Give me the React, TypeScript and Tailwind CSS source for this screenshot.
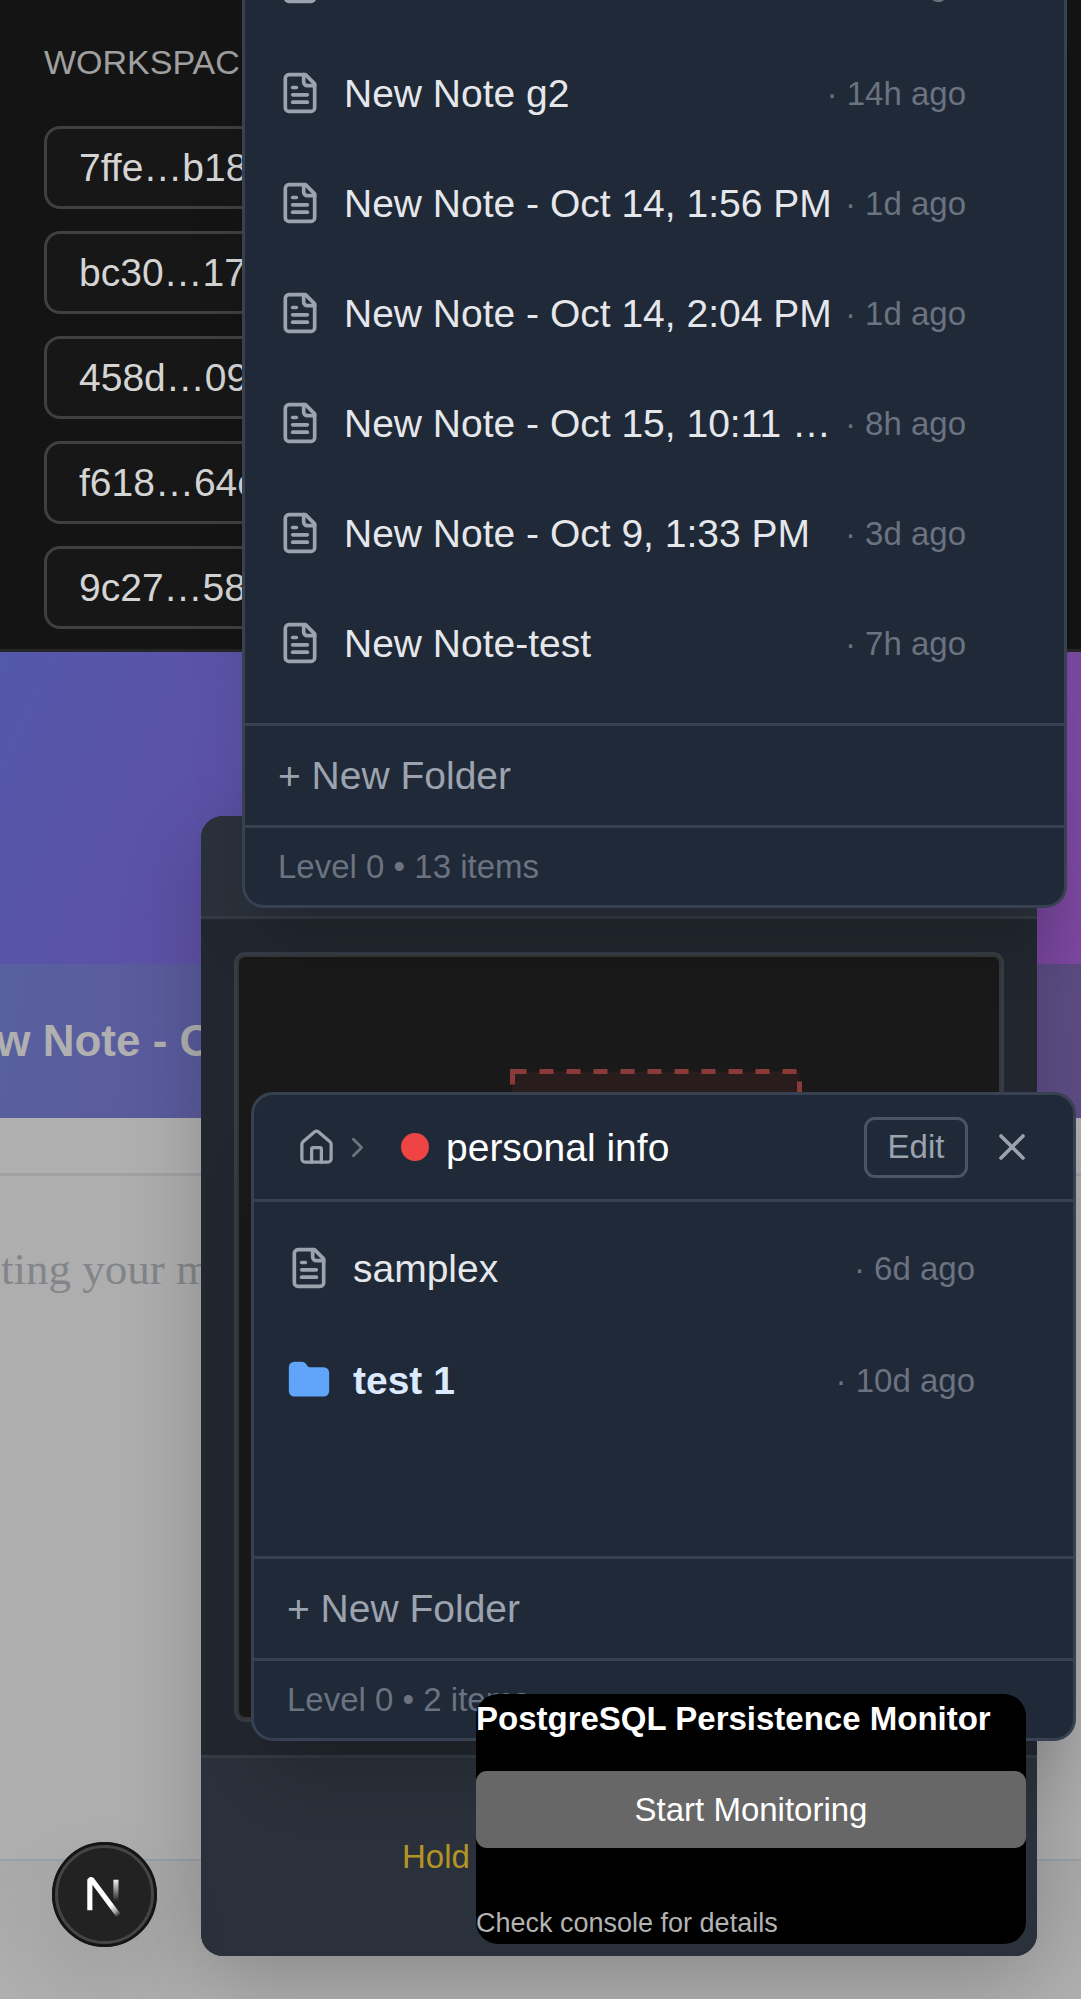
import React from "react";
import { ChevronRight, X } from "lucide-react";

type Item = { kind: "note" | "folder"; title: string; time: string };

const workspaces = ["7ffe…b18", "bc30…17", "458d…09", "f618…64c", "9c27…58"];

const rootItems: Item[] = [
  { kind: "note", title: "New Note", time: "14h ago" },
  { kind: "note", title: "New Note g2", time: "14h ago" },
  { kind: "note", title: "New Note - Oct 14, 1:56 PM", time: "1d ago" },
  { kind: "note", title: "New Note - Oct 14, 2:04 PM", time: "1d ago" },
  { kind: "note", title: "New Note - Oct 15, 10:11 PM", time: "8h ago" },
  { kind: "note", title: "New Note - Oct 9, 1:33 PM", time: "3d ago" },
  { kind: "note", title: "New Note-test", time: "7h ago" },
];

const personalItems: Item[] = [
  { kind: "note", title: "samplex", time: "6d ago" },
  { kind: "folder", title: "test 1", time: "10d ago" },
];

function NoteIcon() {
  return (
    <svg viewBox="0 0 24 24" className="size-11 shrink-0 text-[#9ca3af]" fill="none" stroke="currentColor" strokeWidth="2" strokeLinecap="round" strokeLinejoin="round" aria-hidden="true">
      <path d="M15 2H6a2 2 0 0 0-2 2v16a2 2 0 0 0 2 2h12a2 2 0 0 0 2-2V7Z" />
      <path d="M14 2v4a2 2 0 0 0 2 2h4" />
      <path d="M10 9H8" />
      <path d="M16 13H8" />
      <path d="M16 17H8" />
    </svg>
  );
}

function FolderIcon() {
  return (
    <svg viewBox="0 0 24 24" className="size-11 shrink-0 text-[#60a5fa]" fill="currentColor" stroke="currentColor" strokeWidth="2" strokeLinecap="round" strokeLinejoin="round" aria-hidden="true">
      <path d="M20 20a2 2 0 0 0 2-2V8a2 2 0 0 0-2-2h-7.9a2 2 0 0 1-1.69-.9L9.6 3.9A2 2 0 0 0 7.93 3H4a2 2 0 0 0-2 2v13a2 2 0 0 0 2 2Z" />
    </svg>
  );
}

function HomeIcon() {
  return (
    <svg viewBox="0 0 24 24" className="size-[39px]" fill="none" stroke="currentColor" strokeWidth="2" strokeLinecap="round" strokeLinejoin="round" aria-hidden="true">
      <path d="M15 21v-8a1 1 0 0 0-1-1h-4a1 1 0 0 0-1 1v8" />
      <path d="M3 10a2 2 0 0 1 .709-1.528l7-5.999a2 2 0 0 1 2.582 0l7 5.999A2 2 0 0 1 21 10v9a2 2 0 0 1-2 2H5a2 2 0 0 1-2-2z" />
    </svg>
  );
}

function ItemRow({ item }: { item: Item }) {
  const folder = item.kind === "folder";
  return (
    <li>
      <button type="button" className="flex h-[110px] w-full items-center pr-[98px] pl-[33px] text-left">
        {folder ? <FolderIcon /> : <NoteIcon />}
        <span className={folder ? "ml-[22px] min-w-0 flex-1 truncate font-bold text-[#dbeafe]" : "ml-[22px] min-w-0 flex-1 truncate text-[#e5e7eb]"}>{item.title}</span>
        <span className="ml-[11px] shrink-0 text-[33px] text-[#6b7280]">· {item.time}</span>
      </button>
    </li>
  );
}

function PanelFooter({ count }: { count: number }) {
  return (
    <>
      <div className="border-t-[3px] border-[#374151]">
        <button type="button" className="flex h-[99px] w-full items-center px-[33px] text-left text-[#9ca3af]">+ New Folder</button>
      </div>
      <p className="flex h-20 items-center border-t-[3px] border-[#374151] px-[33px] text-[33px] text-[#6b7280]">Level 0 • {count} items</p>
    </>
  );
}

const panelClass =
  "absolute flex w-[825px] flex-col rounded-[22px] border-[3px] border-[#374151] bg-[#1f2937] text-[39px] leading-[55px] shadow-[0_50px_69px_-20px_rgba(0,0,0,0.2)]";

function NavigatorPopup() {
  return (
    <section className="absolute top-[816px] left-[201px] flex w-[836px] flex-col overflow-hidden rounded-[22px] bg-[#22272f]">
      <header className="h-[103px] border-b-[3px] border-[#353b44] bg-[#2a313a]" />
      <div className="p-[33px]">
        <div className="rounded-[11px] border-[3px] border-[#353d48]">
          <div className="aspect-square rounded-[8px] border-2 border-[#363636] bg-[#191919]">
            <svg viewBox="0 0 760 760" className="size-full" aria-hidden="true">
              <rect x="273.500" y="114.500" width="287" height="300" fill="#281c1c" stroke="#8b3a3a" strokeWidth="5" strokeDasharray="14 13" />
            </svg>
          </div>
        </div>
      </div>
      <footer className="flex h-[201px] items-center border-t-[3px] border-[#353b44] bg-[#2a313a] pl-[201px] text-[33px] text-[#b39525]">Hold</footer>
    </section>
  );
}

function Monitor() {
  return (
    <section className="absolute top-[1694px] left-[476px] w-[550px] overflow-hidden rounded-[22px] bg-black text-[33px] leading-[49px] text-white">
      <h2 className="font-bold whitespace-nowrap">PostgreSQL Persistence Monitor</h2>
      <button type="button" className="mt-7 h-[77px] w-full rounded-[11px] bg-[#676767]">Start Monitoring</button>
      <p className="mt-[55px] text-[27px] leading-[41px] text-[#b3b3b3]">Check console for details</p>
    </section>
  );
}

function DevBadge() {
  return (
    <button type="button" aria-label="Open Next.js Dev Tools" className="absolute top-[1842px] left-[52px] size-[105px] rounded-full bg-[#222222] shadow-[0_44px_88px_rgba(0,0,0,0.1)]">
      <svg viewBox="0 0 105 105" className="size-full" fill="none" aria-hidden="true">
        <defs>
          <linearGradient id="diagonal" gradientUnits="userSpaceOnUse" x1="9.950" y1="10.630" x2="13" y2="14.600">
            <stop stopColor="white" />
            <stop offset="0.600" stopColor="white" stopOpacity="0.600" />
            <stop offset="1" stopColor="white" stopOpacity="0" />
          </linearGradient>
          <linearGradient id="stem" gradientUnits="userSpaceOnUse" x1="11.800" y1="1" x2="11.800" y2="9.300">
            <stop stopColor="white" />
            <stop offset="1" stopColor="white" stopOpacity="0" />
          </linearGradient>
        </defs>
        <circle cx="52.500" cy="52.500" r="51" stroke="#151515" strokeWidth="3" />
        <circle cx="52.500" cy="52.500" r="48" stroke="#454545" strokeWidth="3" />
        <g transform="translate(31.400 33.600) scale(2.750)">
          <path d="M13.3 15.2 L3 1.400 H2.340 V12.600" stroke="url(#diagonal)" strokeWidth="1.860" strokeLinejoin="bevel" />
          <path d="M11.825 1.500 V9.500" stroke="url(#stem)" strokeWidth="1.860" />
        </g>
      </svg>
    </button>
  );
}

export default function App() {
  return (
    <main className="relative flex min-h-screen w-full flex-col overflow-hidden bg-[#afafaf] font-['Liberation_Sans',Arial,sans-serif]">
      <section className="flex flex-col border-b-[3px] border-[#262626] bg-[#141414] px-11 pt-[37px] pb-5">
        <h2 className="mb-[39px] text-[34px] leading-[50px] text-[#a0a0a0]">WORKSPACES</h2>
        <ul className="flex flex-col items-start gap-[22px]">
          {workspaces.map((name) => (
            <li key={name}>
              <button type="button" className="h-[83px] w-[260px] rounded-2xl border-[3px] border-[#404040] bg-[#171717] pt-[2px] pl-8 text-left text-[39px] text-[#d4d4d4]">{name}</button>
            </li>
          ))}
        </ul>
      </section>

      <div className="h-[312px] bg-[linear-gradient(115deg,#5358aa,#5f50a6_30%,#8049a4)]" />

      <section className="flex flex-1 flex-col">
        <header className="flex h-[154px] items-center overflow-hidden bg-[linear-gradient(100deg,#58609e,#5a5a9c_20%,#5e4c84)]">
          <h1 className="-ml-[60px] text-[44px] font-bold whitespace-nowrap text-[#b0b0b0]">New Note - Oct 15</h1>
        </header>
        <div className="h-[58px] border-b-[3px] border-[#9fa3a5] bg-[#b0b0b0]" />
        <div className="flex h-[685px] items-start overflow-hidden border-b-2 border-[#9aa1a7] bg-[#aeaeae] pt-[63px]">
          <p className="ml-px font-['Liberation_Serif',serif] text-[45px] leading-[60px] whitespace-nowrap text-[#82868a]">ting your m</p>
        </div>
        <div className="min-h-[138px] flex-1 bg-[linear-gradient(#a9a9a9,#b0b0b0)]" />
      </section>

      <div className="absolute top-[816px] left-[201px] h-[1139px] w-[836px] rounded-[22px] shadow-[0_27px_82px_rgba(0,0,0,0.2)]" />
      <NavigatorPopup />

      <section className={`${panelClass} -top-[75px] left-[242px]`}>
        <ul className="pb-[25px]">
          {rootItems.map((item) => (
            <ItemRow key={item.title} item={item} />
          ))}
        </ul>
        <PanelFooter count={13} />
      </section>

      <section className={`${panelClass} top-[1092px] left-[251px]`}>
        <header className="flex h-[107px] items-center border-b-[3px] border-[#374151] px-[33px]">
          <button type="button" aria-label="Home" className="p-[10px] text-[#9ca3af]">
            <HomeIcon />
          </button>
          <ChevronRight className="-ml-[5px] size-[33px] text-[#6b7280]" />
          <span className="ml-[27px] size-7 rounded-full bg-[#ef4444]" />
          <h2 className="ml-[17px] flex-1 text-white">personal info</h2>
          <button type="button" className="h-[61px] w-[104px] rounded-[11px] border-[3px] border-[#4b5563] text-[33px] leading-[50px] text-[#9ca3af]">Edit</button>
          <button type="button" aria-label="Close" className="ml-[16px] p-[6px] text-[#9ca3af]">
            <X className="size-11" />
          </button>
        </header>
        <ul className="flex min-h-[354px] flex-col gap-[2px] pt-[11px]">
          {personalItems.map((item) => (
            <ItemRow key={item.title} item={item} />
          ))}
        </ul>
        <PanelFooter count={2} />
      </section>

      <Monitor />
      <DevBadge />
    </main>
  );
}
